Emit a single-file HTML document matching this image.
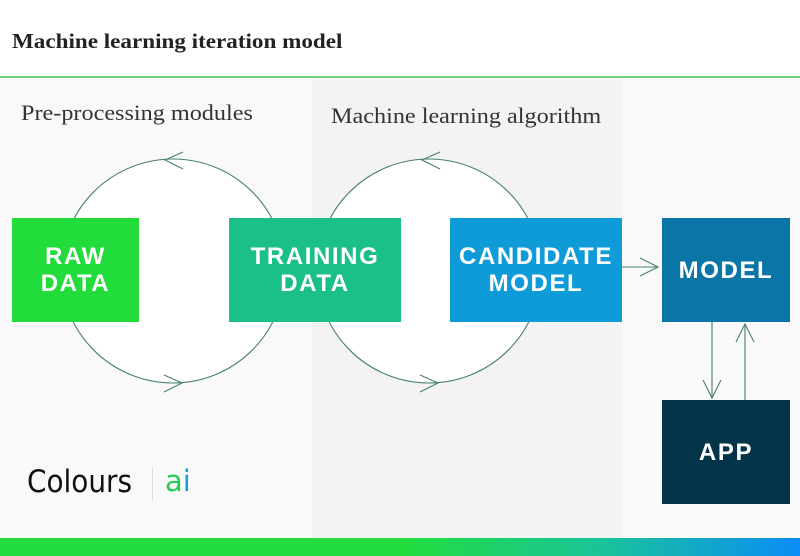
<!DOCTYPE html>
<html><head><style>
html,body{margin:0;padding:0;width:800px;height:556px;overflow:hidden;background:#f9f9f9;position:relative}
.t{position:absolute;font-family:"Liberation Serif",serif;color:#222;transform-origin:left top;white-space:nowrap}
.box{position:absolute;display:flex;align-items:center;justify-content:center;text-align:center;color:#fff;font-family:"Liberation Sans",sans-serif;font-weight:bold;font-size:24px;line-height:27px;letter-spacing:1.6px}
</style></head><body>
<div style="position:absolute;left:0;top:0;width:800px;height:77px;background:#fff"></div>
<div style="position:absolute;left:0;top:76px;width:800px;height:2px;background:#6fd07a"></div>
<div style="position:absolute;left:312px;top:78px;width:310px;height:460px;background:#f3f3f3"></div>
<div class="t" style="left:12px;top:29px;font-size:21px;font-weight:bold;transform:scaleX(1.1)">Machine learning iteration model</div>
<div class="t" style="left:21px;top:100px;font-size:22px;color:#333;transform:scaleX(1.1)">Pre-processing modules</div>
<div class="t" style="left:331px;top:103px;font-size:22px;color:#333;transform:scaleX(1.1)">Machine learning algorithm</div>
<svg style="position:absolute;left:0;top:0" width="800" height="556">
<g stroke="#4a7f74" stroke-width="1.1" fill="#fff">
<circle cx="173" cy="271" r="112"/>
<circle cx="429" cy="271" r="112"/>
</g>
<g stroke="#4a7f74" stroke-width="1.1" fill="none">
<path d="M183 152 L165 160 L183 169"/>
<path d="M164 375 L182 383 L164 392"/>
<path d="M440 152 L422 160 L440 169"/>
<path d="M420 375 L438 383 L420 392"/>
<path d="M622 267 L658 267 M640 258 L658 267 L640 276"/>
<path d="M712 322 L712 398 M703 380 L712 398 L721 380"/>
<path d="M745 400 L745 324 M736 342 L745 324 L754 342"/>
</g>
</svg>
<div class="box" style="left:12px;top:218px;width:127px;height:104px;background:#22dc3c">RAW<br>DATA</div>
<div class="box" style="left:229px;top:218px;width:172px;height:104px;background:#1abf8a">TRAINING<br>DATA</div>
<div class="box" style="left:450px;top:218px;width:172px;height:104px;background:#0f9ad8">CANDIDATE<br>MODEL</div>
<div class="box" style="left:662px;top:218px;width:128px;height:104px;background:#0a76a8">MODEL</div>
<div class="box" style="left:662px;top:400px;width:128px;height:104px;background:#03344a">APP</div>
<div style="position:absolute;left:27px;top:464px;font-family:'DejaVu Sans Condensed','Liberation Sans Narrow',sans-serif;font-size:31px;color:#111">Colours</div>
<div style="position:absolute;left:152px;top:468px;width:1px;height:32px;background:#ddd"></div>
<div style="position:absolute;left:165px;top:464px;font-family:'DejaVu Sans',sans-serif;font-size:29px;color:#22cc55">a<span style="color:#1a9adf">i</span></div>
<div style="position:absolute;left:0;top:538px;width:800px;height:18px;background:linear-gradient(90deg,#22dd3d 0%,#22dd3d 50%,#1ac49a 75%,#0a8cf5 100%)"></div>
</body></html>
